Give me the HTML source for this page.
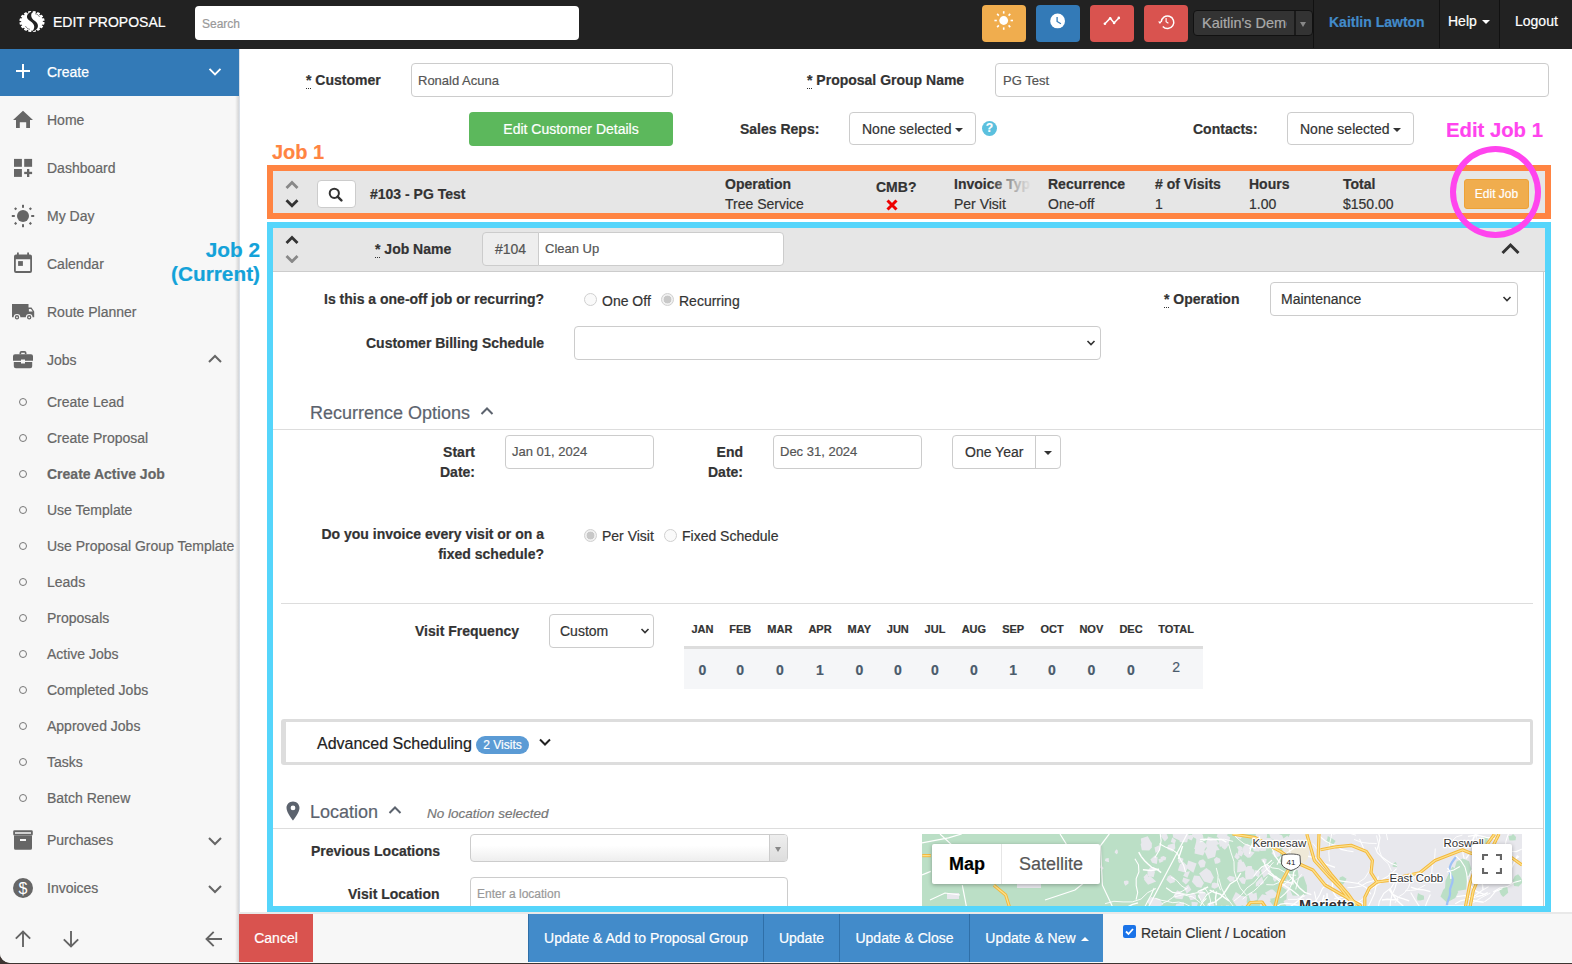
<!DOCTYPE html>
<html><head><meta charset="utf-8">
<style>
*{box-sizing:border-box;margin:0;padding:0}
html,body{width:1572px;height:964px;overflow:hidden;background:#3e3532}
body{font-family:"Liberation Sans",sans-serif;font-size:14px;color:#333;position:relative;-webkit-text-stroke:0.2px currentColor}
.a{position:absolute;white-space:nowrap}
#win{position:absolute;left:0;top:0;width:1572px;height:963px;background:#fff;border-bottom-left-radius:10px;overflow:hidden;border-bottom:1px solid #fafafa}
#hdr{position:absolute;left:0;top:0;width:1572px;height:49px;background:#222;z-index:2}
#side{position:absolute;left:0;top:48px;width:240px;height:915px;background:linear-gradient(to right,#f7f7f7 235px,#e6e6e6 237px,#d8d8d8 238.3px,#d6dce4 239px,#dfe5ec 240px)}
.si{position:absolute;left:47px;color:#666;font-size:14px;line-height:16px}
.sub{position:absolute;left:47px;color:#666;font-size:14px;line-height:16px}
.dot{position:absolute;left:19px;width:8px;height:8px;border:1px solid #777;border-radius:50%}
.hbtn{position:absolute;top:5px;width:44px;height:37px;border-radius:4px}
.lbl{font-weight:bold;color:#333}
.abbr{border-bottom:1px dotted #333}
.caret{position:absolute;width:0;height:0;border-left:4px solid transparent;border-right:4px solid transparent;border-top:4px solid #333}
.radio{position:absolute;width:13px;height:13px;border:1px solid #d0d0d0;border-radius:50%;background:#fafafa}
.radio.on{background:radial-gradient(circle,#c8c8c8 0 3.6px,#f0f0f0 4.2px)}
.mh{width:60px;text-align:center;font-size:11px;font-weight:bold;line-height:13px;color:#333;margin-top:1px}
.mv{width:60px;text-align:center;font-size:14px;font-weight:bold;line-height:16px;color:#4a5b6c}
.fb{top:914px;height:48px;background:#428bca;color:#fff;font-size:14px;line-height:48px;text-align:center;border-left:1px solid #2f6fa8;z-index:4}
.inp{position:absolute;border:1px solid #ccc;border-radius:4px;background:#fff}
</style></head><body>
<div id="win">
<div id="hdr">
  <svg class="a" style="left:17px;top:9px" width="30" height="25" viewBox="-15 -12.5 30 25">
    <g transform="scale(1.06,0.89)" fill="#fff"><circle r="10.2"/><rect x="-1.5" y="-11.9" width="3" height="3" rx="0.6" transform="rotate(11.0)"/><rect x="-1.5" y="-11.9" width="3" height="3" rx="0.6" transform="rotate(33.5)"/><rect x="-1.5" y="-11.9" width="3" height="3" rx="0.6" transform="rotate(56.0)"/><rect x="-1.5" y="-11.9" width="3" height="3" rx="0.6" transform="rotate(78.5)"/><rect x="-1.5" y="-11.9" width="3" height="3" rx="0.6" transform="rotate(101.0)"/><rect x="-1.5" y="-11.9" width="3" height="3" rx="0.6" transform="rotate(123.5)"/><rect x="-1.5" y="-11.9" width="3" height="3" rx="0.6" transform="rotate(146.0)"/><rect x="-1.5" y="-11.9" width="3" height="3" rx="0.6" transform="rotate(168.5)"/><rect x="-1.5" y="-11.9" width="3" height="3" rx="0.6" transform="rotate(191.0)"/><rect x="-1.5" y="-11.9" width="3" height="3" rx="0.6" transform="rotate(213.5)"/><rect x="-1.5" y="-11.9" width="3" height="3" rx="0.6" transform="rotate(236.0)"/><rect x="-1.5" y="-11.9" width="3" height="3" rx="0.6" transform="rotate(258.5)"/><rect x="-1.5" y="-11.9" width="3" height="3" rx="0.6" transform="rotate(281.0)"/><rect x="-1.5" y="-11.9" width="3" height="3" rx="0.6" transform="rotate(303.5)"/><rect x="-1.5" y="-11.9" width="3" height="3" rx="0.6" transform="rotate(326.0)"/><rect x="-1.5" y="-11.9" width="3" height="3" rx="0.6" transform="rotate(348.5)"/></g>
    <path d="M1.8 -10.2 C-5 -9.5 -7.2 -3.8 -2.6 -0.9 C1.2 1.5 4.6 5 0.2 10.2 C7.2 8.2 7.6 2.2 2.6 -0.8 C-1.3 -3.2 -2.2 -8 1.8 -10.2Z" fill="#222"/>
    <path d="M3 -7.8 C5.5 -7.5 7 -6 7.5 -4.5" fill="none" stroke="#777" stroke-width="0.9"/>
    <path d="M-2 7.8 C-4.5 7.5 -6 6 -6.5 4.5" fill="none" stroke="#777" stroke-width="0.9"/>
  </svg>
  <div class="a" style="left:53px;top:14px;color:#fff;font-size:14px;line-height:16px">EDIT PROPOSAL</div>
  <div class="a" style="left:195px;top:6px;width:384px;height:34px;background:#fff;border-radius:4px"></div>
  <div class="a" style="left:202px;top:17px;color:#999;font-size:12px;line-height:14px">Search</div>
  <div class="hbtn" style="left:982px;background:#f0ad4e"></div>
  <svg class="a" style="left:992px;top:9px" width="24" height="24" viewBox="-12 -12 24 24"><g fill="#fff" transform="translate(-0.3,-0.5)"><circle r="4.4"/><rect x="-0.8" y="-9.3" width="1.6" height="2.4" transform="rotate(0)"/><rect x="-0.8" y="-9.3" width="1.6" height="2.4" transform="rotate(45)"/><rect x="-0.8" y="-9.3" width="1.6" height="2.4" transform="rotate(90)"/><rect x="-0.8" y="-9.3" width="1.6" height="2.4" transform="rotate(135)"/><rect x="-0.8" y="-9.3" width="1.6" height="2.4" transform="rotate(180)"/><rect x="-0.8" y="-9.3" width="1.6" height="2.4" transform="rotate(225)"/><rect x="-0.8" y="-9.3" width="1.6" height="2.4" transform="rotate(270)"/><rect x="-0.8" y="-9.3" width="1.6" height="2.4" transform="rotate(315)"/></g></svg>
  <div class="hbtn" style="left:1036px;background:#337ab7"></div>
  <svg class="a" style="left:1046px;top:9px" width="24" height="24" viewBox="-12 -12 24 24"><g transform="translate(-0.4,-0.1)"><circle r="7.4" fill="#fff"/><path d="M-0.5 -3.8 V0.6 L3.3 2.9" fill="none" stroke="#337ab7" stroke-width="1.3"/></g></svg>
  <div class="hbtn" style="left:1090px;background:#d9534f"></div>
  <svg class="a" style="left:1100px;top:9px" width="24" height="24" viewBox="0 0 24 24"><g transform="translate(-1100,-9)"><path d="M1104.9 23.8 L1110.2 18.2 L1114.1 22.9 L1118.8 17.9" fill="none" stroke="#fff" stroke-width="1.5"/><circle cx="1104.9" cy="23.8" r="1.3" fill="#fff"/><circle cx="1110.2" cy="18.2" r="1.3" fill="#fff"/><circle cx="1114.1" cy="22.9" r="1.3" fill="#fff"/><circle cx="1118.8" cy="17.9" r="1.3" fill="#fff"/></g></svg>
  <div class="hbtn" style="left:1144px;background:#d9534f"></div>
  <svg class="a" style="left:1154px;top:9px" width="24" height="24" viewBox="-12 -12 24 24"><g transform="translate(0.4,-0.1)" fill="none" stroke="#fff" stroke-width="1.5"><path d="M-5.2 1.2 A6.3 6.3 0 1 1 -3.6 5.6"/><path d="M-0.3 -2.8 V0.8 L2 2.4" stroke-width="1.1"/></g><path d="M-8.3 0.6 L-4.6 0.6 L-6.45 3.2 Z" fill="#fff" transform="translate(0.4,-0.1)"/></svg>
  <div class="a" style="left:1193px;top:10px;width:120px;height:26px;border:1px solid #111;border-radius:4px;background:#333"></div>
  <div class="a" style="left:1294px;top:11px;width:1.5px;height:24px;background:#1a1a1a"></div>
  <div class="a" style="left:1202px;top:15px;color:#aaa;font-size:14.5px;line-height:17px;width:85px;overflow:hidden">Kaitlin's Demo</div>
  <div class="a" style="left:1300px;top:22px;width:0;height:0;border-left:3px solid transparent;border-right:3px solid transparent;border-top:5px solid #888"></div>
  <div class="a" style="left:1313px;top:0;width:1px;height:48px;background:#111"></div>
  <div class="a" style="left:1329px;top:14px;color:#428bca;font-size:14px;font-weight:bold;line-height:16px">Kaitlin Lawton</div>
  <div class="a" style="left:1439px;top:0;width:1px;height:48px;background:#111"></div>
  <div class="a" style="left:1448px;top:13px;color:#fff;font-size:14px;line-height:16px">Help</div>
  <div class="a" style="left:1482px;top:20px;width:0;height:0;border-left:4px solid transparent;border-right:4px solid transparent;border-top:4px solid #fff"></div>
  <div class="a" style="left:1499px;top:0;width:1px;height:48px;background:#111"></div>
  <div class="a" style="left:1515px;top:13px;color:#fff;font-size:14px;line-height:16px">Logout</div>
</div>

<div id="side">
  <div class="a" style="left:0;top:0;width:239px;height:48px;background:#337ab7"></div>
  <div class="a" style="left:47px;top:16px;color:#fff;font-size:14px;line-height:16px;-webkit-text-stroke:0.25px #fff">Create</div>
  <div class="si" style="top:64px">Home</div>
  <div class="si" style="top:112px">Dashboard</div>
  <div class="si" style="top:160px">My Day</div>
  <div class="si" style="top:208px">Calendar</div>
  <div class="si" style="top:256px">Route Planner</div>
  <div class="si" style="top:304px">Jobs</div>
  <div class="sub" style="top:346px">Create Lead</div>
  <div class="sub" style="top:382px">Create Proposal</div>
  <div class="sub" style="top:418px;font-weight:bold">Create Active Job</div>
  <div class="sub" style="top:454px">Use Template</div>
  <div class="sub" style="top:490px">Use Proposal Group Template</div>
  <div class="sub" style="top:526px">Leads</div>
  <div class="sub" style="top:562px">Proposals</div>
  <div class="sub" style="top:598px">Active Jobs</div>
  <div class="sub" style="top:634px">Completed Jobs</div>
  <div class="sub" style="top:670px">Approved Jobs</div>
  <div class="sub" style="top:706px">Tasks</div>
  <div class="sub" style="top:742px">Batch Renew</div>

  <!-- sidebar icons (coords relative to #side top=48) -->
  <svg class="a" style="left:13px;top:13px" width="20" height="20" viewBox="0 0 20 20"><path d="M10 3 V17 M3 10 H17" fill="none" stroke="#fff" stroke-width="2"/></svg>
  <svg class="a" style="left:207px;top:19px" width="16" height="10" viewBox="0 0 16 10"><path d="M2.5 1.8 L8 7.3 L13.5 1.8" fill="none" stroke="#fff" stroke-width="1.9"/></svg>
  <svg class="a" style="left:13px;top:62px" width="20" height="19" viewBox="0 0 20 19"><path d="M0 10 L10 0.8 L20 10 L17 10 L17 18 L13.2 18 L13.2 12.3 L6.8 12.3 L6.8 18 L3 18 L3 10 Z" fill="#666"/></svg>
  <svg class="a" style="left:13px;top:110px" width="20" height="20" viewBox="0 0 20 20"><g fill="#666"><rect x="1" y="0.9" width="7.9" height="7.9"/><rect x="11.2" y="0.9" width="7.9" height="7.9"/><rect x="1" y="11" width="7.9" height="7.9"/><rect x="14" y="11" width="2.3" height="8"/><rect x="11.2" y="13.8" width="7.9" height="2.3"/></g></svg>
  <svg class="a" style="left:11px;top:156px" width="24" height="24" viewBox="0 0 24 24"><g fill="#666"><circle cx="12" cy="12" r="6"/><rect x="11" y="0.8" width="2" height="3"/><rect x="11" y="20.2" width="2" height="3"/><rect x="0.8" y="11" width="3" height="2"/><rect x="20.2" y="11" width="3" height="2"/><rect x="3.5" y="3.6" width="2.2" height="2.2" transform="rotate(45 4.6 4.7)"/><rect x="18.3" y="3.6" width="2.2" height="2.2" transform="rotate(45 19.4 4.7)"/><rect x="3.5" y="18.3" width="2.2" height="2.2" transform="rotate(45 4.6 19.4)"/><rect x="18.3" y="18.3" width="2.2" height="2.2" transform="rotate(45 19.4 19.4)"/></g></svg>
  <svg class="a" style="left:13px;top:204px" width="20" height="22" viewBox="0 0 20 22"><g fill="#666"><rect x="4" y="0.5" width="1.8" height="3"/><rect x="14.2" y="0.5" width="1.8" height="3"/><path d="M3 2.5 H17 A2 2 0 0 1 19 4.5 V19 A2 2 0 0 1 17 21 H3 A2 2 0 0 1 1 19 V4.5 A2 2 0 0 1 3 2.5 Z M2.8 7.2 V19.1 H17.2 V7.2 Z" fill-rule="evenodd"/><rect x="5.1" y="9.1" width="4.8" height="4.8"/></g></svg>
  <svg class="a" style="left:12px;top:256px" width="23" height="17" viewBox="0 0 23 17"><g fill="#666"><path d="M0 0 H16.5 V3.6 H19.5 L22.2 7.6 V13.2 H0 Z"/></g><path d="M16.9 5 H19 L20.7 7.6 H16.9 Z" fill="#f7f7f7"/><g fill="#666" stroke="#f7f7f7" stroke-width="1.2"><circle cx="5" cy="13.3" r="2.8"/><circle cx="17.2" cy="13.3" r="2.8"/></g><g fill="#f7f7f7"><circle cx="5" cy="13.3" r="0.9"/><circle cx="17.2" cy="13.3" r="0.9"/></g></svg>
  <svg class="a" style="left:13px;top:302px" width="20" height="20" viewBox="0 0 20 20"><g fill="#666"><path d="M6.5 4.3 V3 A2 2 0 0 1 8.5 1 H11.5 A2 2 0 0 1 13.5 3 V4.3 H11.8 V2.8 H8.2 V4.3 Z"/><path d="M2 4.3 H18 A2 2 0 0 1 20 6.3 V10.8 H12 V9.5 H8 V10.8 H0 V6.3 A2 2 0 0 1 2 4.3 Z"/><path d="M0.8 12 H8 V13.5 H12 V12 H19.2 V16.3 A2 2 0 0 1 17.2 18.3 H2.8 A2 2 0 0 1 0.8 16.3 Z"/></g></svg>
  <svg class="a" style="left:207px;top:306px" width="16" height="10" viewBox="0 0 16 10"><path d="M2 8 L8 2 L14 8" fill="none" stroke="#666" stroke-width="2"/></svg>
  <div class="dot" style="top:350px"></div>
<div class="dot" style="top:386px"></div>
<div class="dot" style="top:422px"></div>
<div class="dot" style="top:458px"></div>
<div class="dot" style="top:494px"></div>
<div class="dot" style="top:530px"></div>
<div class="dot" style="top:566px"></div>
<div class="dot" style="top:602px"></div>
<div class="dot" style="top:638px"></div>
<div class="dot" style="top:674px"></div>
<div class="dot" style="top:710px"></div>
<div class="dot" style="top:746px"></div>

  <svg class="a" style="left:13px;top:782px" width="20" height="20" viewBox="0 0 20 20"><g fill="#666"><path d="M1.5 0.2 H18.5 A1.3 1.3 0 0 1 19.8 1.5 V4.2 A1.3 1.3 0 0 1 18.5 5.5 H1.5 A1.3 1.3 0 0 1 0.2 4.2 V1.5 A1.3 1.3 0 0 1 1.5 0.2 Z M2 2.2 V3.8 H18 V2.2 Z" fill-rule="evenodd"/><path d="M1 5.5 H19 V18.2 A1.5 1.5 0 0 1 17.5 19.7 H2.5 A1.5 1.5 0 0 1 1 18.2 Z M7 9 V11 H13 V9 Z" fill-rule="evenodd"/></g></svg>
  <svg class="a" style="left:207px;top:788px" width="16" height="10" viewBox="0 0 16 10"><path d="M2 2 L8 8 L14 2" fill="none" stroke="#666" stroke-width="2"/></svg>
  <svg class="a" style="left:13px;top:830px" width="20" height="20" viewBox="0 0 20 20"><circle cx="10" cy="10" r="10" fill="#666"/><text x="10" y="15.6" text-anchor="middle" font-family="Liberation Sans" font-size="16" fill="#fff">$</text></svg>
  <svg class="a" style="left:207px;top:836px" width="16" height="10" viewBox="0 0 16 10"><path d="M2 2 L8 8 L14 2" fill="none" stroke="#666" stroke-width="2"/></svg>
  <svg class="a" style="left:14px;top:882px" width="18" height="18" viewBox="0 0 18 18"><path d="M9 1.5 V17 M1.8 8.7 L9 1.5 L16.2 8.7" fill="none" stroke="#666" stroke-width="1.9"/></svg>
  <svg class="a" style="left:62px;top:882px" width="18" height="18" viewBox="0 0 18 18"><path d="M9 1 V16.5 M1.8 9.3 L9 16.5 L16.2 9.3" fill="none" stroke="#666" stroke-width="1.9"/></svg>
  <svg class="a" style="left:205px;top:882px" width="18" height="18" viewBox="0 0 18 18"><path d="M1.5 9 H17 M8.7 1.8 L1.5 9 L8.7 16.2" fill="none" stroke="#666" stroke-width="1.9"/></svg>
  <div class="si" style="top:784px">Purchases</div>
  <div class="si" style="top:832px">Invoices</div>
</div>

<div id="main">
  <!-- row 1 -->
  <div class="a lbl" style="left:306px;top:72px;line-height:16px"><span class="abbr">*</span> Customer</div>
  <div class="inp" style="left:411px;top:63px;width:262px;height:34px"></div>
  <div class="a" style="left:418px;top:73px;font-size:13px;line-height:15px;color:#555">Ronald Acuna</div>
  <div class="a lbl" style="left:807px;top:72px;line-height:16px"><span class="abbr">*</span> Proposal Group Name</div>
  <div class="inp" style="left:995px;top:63px;width:554px;height:34px"></div>
  <div class="a" style="left:1003px;top:73px;font-size:13px;line-height:15px;color:#555">PG Test</div>
  <!-- row 2 -->
  <div class="a" style="left:469px;top:112px;width:204px;height:34px;background:#5cb85c;border-radius:4px;color:#fff;text-align:center;line-height:34px">Edit Customer Details</div>
  <div class="a lbl" style="left:740px;top:121px;line-height:16px">Sales Reps:</div>
  <div class="inp" style="left:849px;top:112px;width:127px;height:33px"></div>
  <div class="a" style="left:862px;top:121px;line-height:16px;color:#333">None selected</div>
  <div class="caret" style="left:955px;top:128px"></div>
  <div class="a" style="left:982px;top:121px;width:15px;height:15px;border-radius:50%;background:#5bc0de;color:#fff;font-weight:bold;font-size:12px;line-height:15px;text-align:center">?</div>
  <div class="a lbl" style="left:1193px;top:121px;line-height:16px">Contacts:</div>
  <div class="inp" style="left:1287px;top:112px;width:127px;height:33px"></div>
  <div class="a" style="left:1300px;top:121px;line-height:16px;color:#333">None selected</div>
  <div class="caret" style="left:1393px;top:128px"></div>

  <!-- annotations -->
  <div class="a" style="left:272px;top:140px;color:#ff8442;font-weight:bold;font-size:20px;line-height:24px">Job 1</div>
  <div class="a" style="left:1446px;top:118px;color:#ff44ee;font-weight:bold;font-size:20.3px;line-height:24px">Edit Job 1</div>

  <!-- job 1 -->
  <div class="a" style="left:267px;top:165px;width:1284px;height:54px;border:6px solid #ff8442;background:#e6e6e6"></div>
  <svg class="a" style="left:284px;top:179px" width="16" height="30" viewBox="0 0 16 30">
    <path d="M2.5 9 L8 3.5 L13.5 9" fill="none" stroke="#888" stroke-width="2.8"/>
    <path d="M2.5 21.3 L8 26.8 L13.5 21.3" fill="none" stroke="#333" stroke-width="2.8"/>
  </svg>
  <div class="a" style="left:317px;top:180px;width:39px;height:28px;background:#fff;border:1px solid #ccc;border-radius:4px"></div>
  <svg class="a" style="left:328px;top:187px" width="15" height="15" viewBox="0 0 15 15">
    <circle cx="6.3" cy="6.3" r="4.6" fill="none" stroke="#333" stroke-width="2"/>
    <path d="M9.6 9.6 L13.4 13.4" stroke="#333" stroke-width="2.4" stroke-linecap="round"/>
  </svg>
  <div class="a lbl" style="left:370px;top:186px;line-height:16px">#103 - PG Test</div>
  <div class="a lbl" style="left:725px;top:176px;line-height:16px">Operation</div>
  <div class="a" style="left:725px;top:196px;line-height:16px;color:#333">Tree Service</div>
  <div class="a lbl" style="left:876px;top:179px;line-height:16px">CMB?</div>
  <svg class="a" style="left:886px;top:199px" width="12" height="12" viewBox="0 0 12 12"><path d="M1.5 1.5 L10.5 10.5 M10.5 1.5 L1.5 10.5" stroke="#e00" stroke-width="3"/></svg>
  <div class="a lbl" style="left:954px;top:176px;line-height:16px;width:76px;overflow:hidden">Invoice Type</div>
  <div class="a" style="left:990px;top:174px;width:42px;height:20px;background:linear-gradient(to right,rgba(230,230,230,0),rgba(230,230,230,.6) 50%,#e6e6e6)"></div>
  <div class="a" style="left:954px;top:196px;line-height:16px;color:#333">Per Visit</div>
  <div class="a lbl" style="left:1048px;top:176px;line-height:16px">Recurrence</div>
  <div class="a" style="left:1048px;top:196px;line-height:16px;color:#333">One-off</div>
  <div class="a lbl" style="left:1155px;top:176px;line-height:16px"># of Visits</div>
  <div class="a" style="left:1155px;top:196px;line-height:16px;color:#333">1</div>
  <div class="a lbl" style="left:1249px;top:176px;line-height:16px">Hours</div>
  <div class="a" style="left:1249px;top:196px;line-height:16px;color:#333">1.00</div>
  <div class="a lbl" style="left:1343px;top:176px;line-height:16px">Total</div>
  <div class="a" style="left:1343px;top:196px;line-height:16px;color:#333">$150.00</div>
  <div class="a" style="left:1464px;top:179px;width:65px;height:30px;background:#f0ad4e;border:1px solid #eea236;border-radius:3px;color:#fff;font-size:12px;line-height:28px;text-align:center">Edit Job</div>

  <!-- job 2 box -->
  <div class="a" style="left:267px;top:222px;width:1284px;height:690px;border:6px solid #55d5fb;z-index:3"></div>
  <div class="a" style="left:273px;top:228px;width:1272px;height:44px;background:#e6e6e6;border-bottom:1px solid #ccc"></div>

  <!-- job 2 header -->
  <svg class="a" style="left:284px;top:233px" width="16" height="30" viewBox="0 0 16 30">
    <path d="M2.5 10 L8 4.5 L13.5 10" fill="none" stroke="#333" stroke-width="2.8"/>
    <path d="M2.5 23 L8 28.5 L13.5 23" fill="none" stroke="#888" stroke-width="2.8"/>
  </svg>
  <div class="a lbl" style="left:375px;top:241px;line-height:16px"><span class="abbr">*</span> Job Name</div>
  <div class="a" style="left:482px;top:232px;width:57px;height:34px;background:#eee;border:1px solid #ccc;border-radius:4px 0 0 4px;color:#555;line-height:32px;text-align:center">#104</div>
  <div class="inp" style="left:538px;top:232px;width:246px;height:34px;border-radius:0 4px 4px 0"></div>
  <div class="a" style="left:545px;top:241px;font-size:13px;line-height:15px;color:#555">Clean Up</div>
  <svg class="a" style="left:1500px;top:242px" width="21" height="14" viewBox="0 0 21 14">
    <path d="M2.5 11 L10.5 3 L18.5 11" fill="none" stroke="#333" stroke-width="3"/>
  </svg>
  <!-- inner panel border -->
  <div class="a" style="left:1543px;top:272px;width:1px;height:640px;background:#ccc"></div>

  <div class="a lbl" style="left:324px;top:291px;line-height:16px">Is this a one-off job or recurring?</div>
  <div class="radio" style="left:584px;top:293px"></div>
  <div class="a" style="left:602px;top:293px;line-height:16px;color:#333">One Off</div>
  <div class="radio on" style="left:661px;top:293px"></div>
  <div class="a" style="left:679px;top:293px;line-height:16px;color:#333">Recurring</div>

  <div class="a lbl" style="left:1164px;top:291px;line-height:16px"><span class="abbr">*</span> Operation</div>
  <div class="inp" style="left:1270px;top:282px;width:248px;height:34px"></div>
  <div class="a" style="left:1281px;top:291px;line-height:16px;color:#333">Maintenance</div>
  <svg class="a" style="left:1502px;top:295px" width="10" height="8" viewBox="0 0 10 8"><path d="M1.5 2 L5 5.5 L8.5 2" fill="none" stroke="#333" stroke-width="1.6"/></svg>

  <div class="a lbl" style="left:366px;top:335px;line-height:16px">Customer Billing Schedule</div>
  <div class="inp" style="left:574px;top:326px;width:527px;height:34px"></div>
  <svg class="a" style="left:1086px;top:339px" width="10" height="8" viewBox="0 0 10 8"><path d="M1.5 2 L5 5.5 L8.5 2" fill="none" stroke="#333" stroke-width="1.6"/></svg>

  <div class="a" style="left:310px;top:403px;font-size:18px;line-height:21px;color:#5c636e">Recurrence Options</div>
  <svg class="a" style="left:479px;top:405px" width="16" height="12" viewBox="0 0 16 12"><path d="M2.5 9 L8 3.5 L13.5 9" fill="none" stroke="#5c636e" stroke-width="2"/></svg>
  <div class="a" style="left:273px;top:429px;width:1270px;height:1px;background:#ddd"></div>

  <div class="a lbl" style="left:430px;top:442px;line-height:20px;text-align:right;width:45px;white-space:normal">Start Date:</div>
  <div class="inp" style="left:505px;top:435px;width:149px;height:34px"></div>
  <div class="a" style="left:512px;top:444px;font-size:13px;line-height:15px;color:#555">Jan 01, 2024</div>
  <div class="a lbl" style="left:697px;top:442px;line-height:20px;text-align:right;width:46px;white-space:normal">End Date:</div>
  <div class="inp" style="left:773px;top:435px;width:149px;height:34px"></div>
  <div class="a" style="left:780px;top:444px;font-size:13px;line-height:15px;color:#555">Dec 31, 2024</div>
  <div class="inp" style="left:952px;top:435px;width:109px;height:34px"></div>
  <div class="a" style="left:1035px;top:436px;width:1px;height:32px;background:#ccc"></div>
  <div class="a" style="left:965px;top:444px;line-height:16px;color:#333">One Year</div>
  <div class="caret" style="left:1044px;top:451px"></div>

  <div class="a lbl" style="left:300px;top:524px;line-height:20px;text-align:right;width:244px;white-space:normal">Do you invoice every visit or on a fixed schedule?</div>
  <div class="radio on" style="left:584px;top:529px"></div>
  <div class="a" style="left:602px;top:528px;line-height:16px;color:#333">Per Visit</div>
  <div class="radio" style="left:664px;top:529px"></div>
  <div class="a" style="left:682px;top:528px;line-height:16px;color:#333">Fixed Schedule</div>

  <div class="a" style="left:281px;top:603px;width:1252px;height:1px;background:#ddd"></div>

  <div class="a lbl" style="left:415px;top:623px;line-height:16px">Visit Frequency</div>
  <div class="inp" style="left:549px;top:614px;width:105px;height:34px"></div>
  <div class="a" style="left:560px;top:623px;line-height:16px;color:#333">Custom</div>
  <svg class="a" style="left:640px;top:627px" width="10" height="8" viewBox="0 0 10 8"><path d="M1.5 2 L5 5.5 L8.5 2" fill="none" stroke="#333" stroke-width="1.6"/></svg>

  <div class="a" style="left:684px;top:646px;width:519px;height:3px;background:#ddd"></div>
  <div class="a" style="left:684px;top:649px;width:519px;height:40px;background:#f5f6f8"></div>
  <div class="a mh" style="left:672.4px;top:622px">JAN</div>
<div class="a mv" style="left:672.4px;top:662px">0</div>
<div class="a mh" style="left:710.2px;top:622px">FEB</div>
<div class="a mv" style="left:710.2px;top:662px">0</div>
<div class="a mh" style="left:749.9px;top:622px">MAR</div>
<div class="a mv" style="left:749.9px;top:662px">0</div>
<div class="a mh" style="left:790.0px;top:622px">APR</div>
<div class="a mv" style="left:790.0px;top:662px">1</div>
<div class="a mh" style="left:829.3px;top:622px">MAY</div>
<div class="a mv" style="left:829.3px;top:662px">0</div>
<div class="a mh" style="left:867.8px;top:622px">JUN</div>
<div class="a mv" style="left:867.8px;top:662px">0</div>
<div class="a mh" style="left:905.0px;top:622px">JUL</div>
<div class="a mv" style="left:905.0px;top:662px">0</div>
<div class="a mh" style="left:943.9px;top:622px">AUG</div>
<div class="a mv" style="left:943.9px;top:662px">0</div>
<div class="a mh" style="left:983.2px;top:622px">SEP</div>
<div class="a mv" style="left:983.2px;top:662px">1</div>
<div class="a mh" style="left:1022.0px;top:622px">OCT</div>
<div class="a mv" style="left:1022.0px;top:662px">0</div>
<div class="a mh" style="left:1061.3px;top:622px">NOV</div>
<div class="a mv" style="left:1061.3px;top:662px">0</div>
<div class="a mh" style="left:1101.0px;top:622px">DEC</div>
<div class="a mv" style="left:1101.0px;top:662px">0</div>
<div class="a mh" style="left:1146.1px;top:622px">TOTAL</div>
<div class="a mv" style="left:1146.1px;top:659px;font-weight:normal">2</div>


  <!-- advanced scheduling -->
  <div class="a" style="left:281px;top:719px;width:1252px;height:46px;border:3px solid #ddd;border-left-width:5px;border-radius:3px;background:#fff"></div>
  <div class="a" style="left:317px;top:735px;font-size:16px;line-height:18px;color:#222">Advanced Scheduling</div>
  <div class="a" style="left:476px;top:736px;width:53px;height:18px;border-radius:9px;background:#5b9bd5;color:#fff;font-size:12px;line-height:18px;text-align:center">2 Visits</div>
  <svg class="a" style="left:538px;top:737px" width="14" height="11" viewBox="0 0 14 11"><path d="M2 2.5 L7 7.5 L12 2.5" fill="none" stroke="#222" stroke-width="2"/></svg>

  <!-- location -->
  <svg class="a" style="left:286px;top:801px" width="14" height="20" viewBox="0 0 14 20"><path d="M7 0.5 C3.4 0.5 0.5 3.3 0.5 6.9 C0.5 11.5 7 19.5 7 19.5 C7 19.5 13.5 11.5 13.5 6.9 C13.5 3.3 10.6 0.5 7 0.5Z M7 4.5 A2.4 2.4 0 1 1 7 9.3 A2.4 2.4 0 1 1 7 4.5Z" fill="#5c636e" fill-rule="evenodd"/></svg>
  <div class="a" style="left:310px;top:802px;font-size:18px;line-height:21px;color:#5c636e">Location</div>
  <svg class="a" style="left:387px;top:804px" width="16" height="12" viewBox="0 0 16 12"><path d="M2.5 9 L8 3.5 L13.5 9" fill="none" stroke="#5c636e" stroke-width="2"/></svg>
  <div class="a" style="left:427px;top:806px;font-style:italic;font-size:13.5px;line-height:16px;color:#777">No location selected</div>
  <div class="a" style="left:273px;top:828px;width:1270px;height:1px;background:#ddd"></div>

  <div class="a lbl" style="left:311px;top:843px;line-height:16px">Previous Locations</div>
  <div class="a" style="left:470px;top:834px;width:318px;height:28px;border:1px solid #ccc;border-radius:4px;background:linear-gradient(#fff 40%,#eee)"></div>
  <div class="a" style="left:769px;top:835px;width:18px;height:26px;border-left:1px solid #ccc;background:linear-gradient(#eee,#ddd);border-radius:0 3px 3px 0"></div>
  <div class="a" style="left:775px;top:847px;width:0;height:0;border-left:3px solid transparent;border-right:3px solid transparent;border-top:5px solid #888"></div>
  <div class="a lbl" style="left:348px;top:886px;line-height:16px">Visit Location</div>
  <div class="inp" style="left:470px;top:877px;width:318px;height:34px"></div>
  <div class="a" style="left:477px;top:887px;font-size:12px;line-height:14px;color:#999">Enter a location</div>


  <!-- Job 2 annotation -->
  <div class="a" style="left:140px;top:238px;width:120px;text-align:right;color:#14a2d9;font-weight:bold;font-size:20.8px;line-height:23.5px;z-index:5">Job 2<br>(Current)</div>
  <!-- magenta circle -->
  <div class="a" style="left:1450px;top:146px;width:91px;height:92px;border:6px solid #ff44ee;border-radius:50%;z-index:6"></div>

  <!-- footer -->
  <div class="a" style="left:239px;top:912px;width:1333px;height:50px;background:#f7f7f7;border-top:2px solid #e9e9e9;z-index:4"></div>
  <div class="a" style="left:239px;top:914px;width:74px;height:48px;background:#d9534f;color:#fff;font-size:14px;line-height:48px;text-align:center;z-index:4">Cancel</div>
  <div class="a fb" style="left:528px;width:235px">Update &amp; Add to Proposal Group</div>
  <div class="a fb" style="left:763px;width:76px">Update</div>
  <div class="a fb" style="left:839px;width:130px">Update &amp; Close</div>
  <div class="a fb" style="left:969px;width:134px;padding-right:12px">Update &amp; New</div>
  <div class="a" style="left:1081px;top:937px;width:0;height:0;border-left:4px solid transparent;border-right:4px solid transparent;border-bottom:4px solid #fff;z-index:5"></div>
  <div class="a" style="left:1123px;top:925px;width:13px;height:13px;border-radius:2px;background:#1a73e8;z-index:5"></div>
  <svg class="a" style="left:1123px;top:925px;z-index:6" width="13" height="13" viewBox="0 0 13 13"><path d="M3 6.5 L5.5 9 L10 4" fill="none" stroke="#fff" stroke-width="1.8"/></svg>
  <div class="a" style="left:1141px;top:925px;line-height:16px;color:#333;z-index:5">Retain Client / Location</div>
  <!-- map -->
  <div class="a" id="map" style="left:922px;top:834px;width:600px;height:80px;overflow:hidden">
  <svg width="600" height="80" viewBox="922 834 600 80"><rect x="922" y="834" width="600" height="80" fill="#bbdfc6"/><path d="M1290 834 L1522 834 L1522 914 L1285 914 C1290 890 1282 860 1290 834Z" fill="#e8e8ed"/><polygon points="1147.9,879.5 1144.7,879.4 1143.5,876.9 1146.7,873.8 1148.2,875.7 1148.5,877.7" fill="#e8e8ed"/><polygon points="1174.9,882.0 1170.3,883.6 1166.3,879.7 1168.0,876.5 1170.2,875.1 1174.6,877.9" fill="#e8e8ed"/><polygon points="1183.3,877.4 1190.1,879.7 1185.9,884.6 1182.2,881.3" fill="#e8e8ed"/><polygon points="1206.4,893.2 1202.3,901.5 1197.7,897.1 1200.5,889.9" fill="#e8e8ed"/><polygon points="1151.6,842.9 1141.6,845.4 1140.8,838.5 1147.8,836.3" fill="#e8e8ed"/><polygon points="1211.0,847.8 1207.5,847.7 1205.8,845.7 1209.2,842.5 1211.3,845.5" fill="#e8e8ed"/><polygon points="1291.1,845.5 1288.4,847.5 1284.2,844.3 1288.1,841.9" fill="#e8e8ed"/><polygon points="1279.2,908.4 1276.4,915.8 1271.4,916.1 1268.2,911.5 1269.8,907.8" fill="#e8e8ed"/><polygon points="1158.4,859.2 1160.9,858.4 1163.9,861.0 1159.6,863.1" fill="#e8e8ed"/><polygon points="1206.0,843.5 1207.9,836.5 1215.6,838.9 1219.8,843.9 1209.7,847.0" fill="#e8e8ed"/><polygon points="1218.9,828.5 1229.1,830.0 1224.6,842.3 1216.7,836.8" fill="#e8e8ed"/><polygon points="1259.1,900.3 1262.6,897.4 1265.1,896.9 1268.4,900.1 1265.4,903.8 1262.1,902.7" fill="#e8e8ed"/><polygon points="1154.2,866.9 1154.8,872.3 1153.7,877.2 1147.5,875.7 1147.5,871.4 1150.0,867.4" fill="#e8e8ed"/><polygon points="1261.9,910.4 1268.5,911.5 1263.1,917.1 1257.2,913.4" fill="#e8e8ed"/><polygon points="1241.2,859.2 1242.4,862.5 1238.7,863.6 1238.2,860.3" fill="#e8e8ed"/><polygon points="1246.3,904.2 1237.2,907.1 1233.5,901.7 1237.0,897.7 1242.7,896.0 1247.3,897.1" fill="#e8e8ed"/><polygon points="1272.9,836.5 1277.1,834.1 1279.2,837.1 1276.1,840.0" fill="#e8e8ed"/><polygon points="1199.1,873.6 1206.3,868.1 1210.5,870.9 1213.8,877.4 1211.0,883.6 1204.1,881.4" fill="#e8e8ed"/><polygon points="1290.0,884.2 1286.3,889.7 1280.6,885.7 1283.9,882.7" fill="#e8e8ed"/><polygon points="1215.1,863.7 1213.9,859.3 1216.4,857.1 1220.1,858.8 1220.5,862.0 1217.8,863.5" fill="#e8e8ed"/><polygon points="1183.8,902.2 1184.6,909.7 1178.5,914.2 1173.8,910.2 1176.4,903.8" fill="#e8e8ed"/><polygon points="1279.9,856.1 1277.0,857.3 1275.1,855.2 1277.8,852.0 1280.1,852.0" fill="#e8e8ed"/><polygon points="1176.0,840.2 1174.8,843.5 1170.8,842.0 1172.2,837.4" fill="#e8e8ed"/><polygon points="1293.3,870.9 1295.8,875.7 1294.5,879.5 1288.7,878.4 1286.2,874.6 1289.2,871.4" fill="#e8e8ed"/><polygon points="1192.1,835.0 1193.2,837.6 1191.5,840.4 1188.0,838.8 1188.2,836.5 1189.9,834.7" fill="#e8e8ed"/><polygon points="1166.8,847.9 1168.4,845.2 1171.7,845.2 1171.8,848.1 1169.3,849.8" fill="#e8e8ed"/><polygon points="1249.0,850.3 1247.6,852.8 1244.2,853.4 1242.8,850.6 1245.1,847.2" fill="#e8e8ed"/><polygon points="1279.9,844.7 1273.9,840.5 1275.0,832.6 1282.0,835.2 1285.1,841.8" fill="#e8e8ed"/><polygon points="1255.8,886.7 1255.8,882.6 1259.2,881.2 1259.3,885.4" fill="#e8e8ed"/><polygon points="1297.7,878.4 1293.7,881.1 1292.0,879.6 1292.6,876.0 1295.0,876.0" fill="#e8e8ed"/><polygon points="1219.1,917.8 1211.3,914.7 1214.9,909.1 1222.0,905.6 1225.6,909.2 1223.5,915.6" fill="#e8e8ed"/><polygon points="1156.9,863.9 1152.1,862.7 1150.4,859.6 1154.8,855.4 1157.7,857.6" fill="#e8e8ed"/><polygon points="1172.2,831.0 1181.7,831.1 1186.2,838.9 1179.7,840.4 1173.2,837.6" fill="#e8e8ed"/><polygon points="1273.1,879.6 1272.8,876.6 1275.8,875.5 1277.2,876.6 1277.5,879.4 1274.8,881.9" fill="#e8e8ed"/><polygon points="1203.0,855.5 1194.5,853.6 1195.4,846.4 1205.4,850.8" fill="#e8e8ed"/><polygon points="1155.6,853.0 1154.5,847.4 1159.7,845.1 1160.2,850.0" fill="#e8e8ed"/><polygon points="1182.3,899.3 1175.5,898.5 1173.8,895.1 1177.2,890.2 1184.6,893.9" fill="#e8e8ed"/><polygon points="1278.8,833.0 1276.6,841.2 1270.7,838.0 1268.2,831.1 1274.4,829.3" fill="#e8e8ed"/><polygon points="1293.5,843.7 1290.5,847.3 1284.3,843.6 1289.7,834.9 1294.8,837.5" fill="#e8e8ed"/><polygon points="1252.4,846.0 1252.1,837.1 1264.0,834.3 1262.3,847.5" fill="#e8e8ed"/><polygon points="1206.7,848.2 1215.7,845.6 1216.4,849.7 1215.1,856.7 1207.9,859.0 1204.7,851.6" fill="#e8e8ed"/><polygon points="1198.4,838.3 1193.1,833.1 1195.1,825.7 1206.2,829.2" fill="#e8e8ed"/><polygon points="1219.7,850.1 1215.6,850.6 1210.8,850.3 1211.1,846.1 1213.3,842.6 1216.7,845.3" fill="#e8e8ed"/><polygon points="1145.8,840.0 1151.9,842.9 1151.8,847.6 1149.2,850.5 1141.8,850.3 1140.6,843.9" fill="#e8e8ed"/><polygon points="1262.4,867.4 1266.9,863.6 1270.4,867.2 1269.1,872.0 1264.3,872.5" fill="#e8e8ed"/><polygon points="1261.9,840.8 1261.0,836.9 1262.6,834.8 1264.4,835.4 1267.3,837.9 1265.1,840.8" fill="#e8e8ed"/><polygon points="1288.8,908.4 1292.9,911.1 1289.5,916.2 1285.8,914.3 1285.9,909.1" fill="#e8e8ed"/><polygon points="1261.3,885.0 1256.5,882.0 1261.9,876.6 1264.0,883.1" fill="#e8e8ed"/><polygon points="1251.7,866.0 1253.2,872.2 1248.5,873.5 1245.9,872.4 1244.8,868.7 1247.8,866.0" fill="#e8e8ed"/><polygon points="1164.8,841.6 1162.5,838.4 1160.8,835.7 1165.5,832.6 1167.1,834.8 1168.1,838.0" fill="#e8e8ed"/><polygon points="1198.0,902.5 1196.8,907.0 1194.3,907.7 1191.8,906.4 1191.5,901.8 1194.6,902.1" fill="#e8e8ed"/><polygon points="1191.3,889.8 1186.7,893.8 1184.3,888.1 1188.3,884.6" fill="#e8e8ed"/><polygon points="1237.0,872.4 1237.7,861.9 1243.7,861.7 1247.3,869.1 1243.7,871.2" fill="#e8e8ed"/><polygon points="1156.2,881.4 1148.0,884.8 1143.9,879.6 1149.9,875.8" fill="#e8e8ed"/><polygon points="1286.3,855.3 1281.9,849.8 1288.7,839.9 1297.4,844.8 1295.0,853.9" fill="#e8e8ed"/><polygon points="1141.0,916.3 1137.4,912.1 1142.1,907.9 1144.8,911.4" fill="#e8e8ed"/><polygon points="1230.1,881.9 1226.8,878.3 1229.7,875.8 1234.7,877.1 1234.4,880.8" fill="#e8e8ed"/><polygon points="1196.1,837.3 1196.3,832.8 1202.8,834.4 1203.7,839.6 1196.5,841.7" fill="#e8e8ed"/><polygon points="1262.1,827.1 1267.6,833.3 1262.1,838.1 1256.6,840.1 1255.9,836.0 1258.5,830.4" fill="#e8e8ed"/><polygon points="1185.5,832.5 1188.2,833.7 1189.3,836.9 1185.6,839.4 1182.5,835.5" fill="#e8e8ed"/><polygon points="1195.9,894.9 1196.2,899.1 1190.6,900.2 1188.6,896.4 1190.9,894.0 1193.1,892.5" fill="#e8e8ed"/><polygon points="1199.3,860.5 1203.1,859.2 1205.8,861.9 1204.6,867.0 1200.5,867.7 1198.1,863.0" fill="#e8e8ed"/><polygon points="1286.3,854.7 1282.6,855.9 1281.4,854.0 1283.5,849.4 1286.2,849.4 1287.9,852.1" fill="#e8e8ed"/><polygon points="1162.5,835.2 1158.7,833.1 1161.8,829.9 1164.3,831.3" fill="#e8e8ed"/><polygon points="1163.6,856.1 1166.3,857.6 1165.5,860.2 1162.5,860.3 1160.9,859.3 1160.6,856.9" fill="#e8e8ed"/><polygon points="1254.6,852.6 1250.4,857.4 1247.6,857.8 1243.2,854.0 1246.1,852.1 1250.9,851.3" fill="#e8e8ed"/><polygon points="1203.9,883.1 1201.3,887.8 1196.7,886.9 1191.9,881.7 1194.1,875.4 1199.5,876.0" fill="#e8e8ed"/><polygon points="1227.5,845.2 1227.5,847.1 1224.8,849.8 1221.9,847.6 1222.2,845.3 1225.4,842.5" fill="#e8e8ed"/><polygon points="1270.5,903.9 1270.2,908.9 1263.2,914.3 1258.4,909.0 1262.1,902.9 1265.8,902.0" fill="#e8e8ed"/><polygon points="1253.7,851.2 1252.0,845.1 1259.7,845.8 1259.4,851.5" fill="#e8e8ed"/><polygon points="1250.9,902.1 1248.6,895.6 1256.5,892.6 1257.4,899.6" fill="#e8e8ed"/><polygon points="1261.3,850.9 1258.6,850.3 1259.9,845.8 1262.9,844.5 1267.1,846.1 1265.8,850.7" fill="#e8e8ed"/><polygon points="1186.3,868.1 1188.2,860.5 1196.6,863.4 1193.4,872.8" fill="#e8e8ed"/><polygon points="1282.6,838.9 1287.3,835.7 1292.8,842.4 1290.2,846.3 1282.8,847.8 1280.7,844.6" fill="#e8e8ed"/><polygon points="1279.1,848.0 1281.1,853.1 1278.4,855.2 1275.0,857.0 1271.4,853.0 1275.8,849.0" fill="#e8e8ed"/><polygon points="1239.9,845.8 1242.6,847.6 1242.7,850.3 1239.5,851.5 1236.7,847.0" fill="#e8e8ed"/><polygon points="1214.1,882.5 1218.6,883.7 1218.3,886.9 1214.6,888.8 1211.4,887.2 1212.0,883.3" fill="#e8e8ed"/><polygon points="1167.9,844.9 1174.8,843.0 1175.3,848.2 1172.4,851.7 1167.5,848.9" fill="#e8e8ed"/><polygon points="1237.4,915.0 1238.2,906.9 1247.2,904.9 1245.5,915.3" fill="#e8e8ed"/><polygon points="1245.6,879.7 1245.0,873.3 1246.1,867.6 1254.3,869.8 1255.1,875.8 1252.1,878.9" fill="#e8e8ed"/><polygon points="1246.1,879.6 1244.8,884.0 1241.8,883.6 1238.5,878.8 1243.0,876.8" fill="#e8e8ed"/><polygon points="1266.6,865.3 1271.5,871.5 1263.6,877.9 1260.7,869.9" fill="#e8e8ed"/><polygon points="1257.8,900.2 1262.1,894.3 1270.0,895.7 1270.6,900.7 1261.1,905.2" fill="#e8e8ed"/><polygon points="1241.6,856.6 1237.3,854.7 1238.6,849.7 1244.2,851.7" fill="#e8e8ed"/><polygon points="1236.4,852.4 1239.9,856.9 1237.4,859.7 1234.3,857.1" fill="#e8e8ed"/><polygon points="1207.0,841.5 1209.7,838.5 1213.6,842.4 1213.6,846.8 1207.6,849.2 1206.1,846.7" fill="#e8e8ed"/><polygon points="1239.2,827.8 1242.9,834.7 1240.8,838.9 1235.4,836.9 1234.6,830.0" fill="#e8e8ed"/><polygon points="1179.2,863.2 1178.0,860.8 1179.1,857.1 1183.4,858.8 1182.8,861.9" fill="#e8e8ed"/><polygon points="1255.9,833.4 1257.8,827.7 1267.0,830.9 1267.0,836.7 1260.7,841.5 1255.3,840.7" fill="#e8e8ed"/><polygon points="1243.2,905.8 1243.6,904.5 1246.8,902.3 1247.8,905.2 1247.2,908.4 1244.6,907.9" fill="#e8e8ed"/><polygon points="1179.9,864.3 1183.2,861.8 1187.4,865.7 1186.9,869.9 1184.8,872.4 1177.9,870.4" fill="#e8e8ed"/><polygon points="1230.2,837.5 1228.2,846.0 1219.8,846.8 1218.3,839.5 1221.2,833.6 1226.5,835.1" fill="#e8e8ed"/><polygon points="1264.9,892.7 1270.8,889.6 1272.8,889.5 1278.0,894.6 1274.2,897.9 1269.6,898.7" fill="#e8e8ed"/><polygon points="1287.7,899.0 1291.1,901.0 1290.8,904.1 1288.1,906.2 1284.7,904.1 1283.5,901.0" fill="#e8e8ed"/><polygon points="1246.2,899.7 1243.6,903.8 1235.7,904.3 1232.1,899.6 1235.8,892.1 1240.2,895.1" fill="#e8e8ed"/><polygon points="1268.3,913.8 1262.4,913.5 1259.0,907.4 1261.8,901.4 1268.0,899.3 1274.1,906.6" fill="#e8e8ed"/><polygon points="1179.2,835.5 1186.0,831.0 1188.6,836.1 1187.2,842.2 1179.8,842.3" fill="#e8e8ed"/><polygon points="1187.4,877.7 1183.2,875.8 1185.2,872.0 1190.0,871.3" fill="#e8e8ed"/><polygon points="1257.9,843.7 1262.6,841.0 1264.2,844.0 1263.2,848.0 1261.4,849.2 1256.7,846.6" fill="#e8e8ed"/><polygon points="1163.2,904.8 1153.0,909.2 1146.9,901.4 1151.1,896.9 1159.7,899.0" fill="#e8e8ed"/><polygon points="1281.7,854.6 1286.0,849.7 1291.3,850.3 1295.4,855.8 1292.4,857.8 1286.5,860.5" fill="#e8e8ed"/><polygon points="1260.3,871.6 1258.4,877.2 1253.9,874.7 1255.3,869.9" fill="#e8e8ed"/><polygon points="1215.3,843.4 1214.2,847.5 1211.9,848.6 1209.5,847.9 1208.6,844.2 1212.5,841.9" fill="#e8e8ed"/><polygon points="1199.9,826.9 1202.4,833.4 1200.0,841.1 1191.8,836.2 1193.3,828.8" fill="#e8e8ed"/><polygon points="1201.8,840.4 1207.3,845.1 1204.0,850.8 1194.2,849.0 1196.7,839.8" fill="#e8e8ed"/><polygon points="1277.5,844.2 1272.2,847.0 1264.2,844.2 1264.0,838.1 1271.1,837.9" fill="#e8e8ed"/><polygon points="1263.9,862.5 1262.0,861.4 1261.3,858.9 1264.7,858.5 1266.7,859.3 1266.1,863.4" fill="#e8e8ed"/><polygon points="1251.7,892.5 1253.3,894.0 1254.8,897.1 1252.3,898.3 1249.5,897.6 1248.2,894.1" fill="#e8e8ed"/><polygon points="1214.7,906.5 1210.8,908.4 1206.7,905.9 1208.6,903.4 1212.9,901.3" fill="#e8e8ed"/><polygon points="1224.0,907.5 1226.1,905.6 1229.0,905.6 1229.5,906.9 1229.7,910.4 1226.7,909.7" fill="#e8e8ed"/><polygon points="1242.0,850.3 1243.9,845.8 1247.3,843.8 1252.4,847.0 1249.1,851.7 1246.4,855.2" fill="#e8e8ed"/><polygon points="1115.0,850.9 1116.6,849.2 1117.7,850.6 1117.9,853.0 1116.6,854.3 1114.6,852.5" fill="#e8e8ed"/><polygon points="1108.7,857.9 1108.8,860.2 1109.1,862.3 1106.2,861.6 1104.9,860.7 1105.6,858.6" fill="#e8e8ed"/><polygon points="1102.5,869.8 1099.9,867.5 1100.8,865.1 1103.6,868.0" fill="#e8e8ed"/><polygon points="1125.4,885.8 1123.9,883.1 1124.0,880.9 1126.9,880.4 1128.5,881.1 1128.5,883.6" fill="#e8e8ed"/><rect x="1017" y="883" width="24" height="5" fill="#e8e8ed"/><rect x="947" y="893" width="12" height="6" fill="#e8e8ed"/><polygon points="1306.8,885.6 1307.1,894.2 1300.1,895.8 1292.6,895.6 1288.8,887.0 1293.2,881.8 1303.4,875.9" fill="#bbdfc6"/><polygon points="1286.1,869.7 1290.7,866.9 1297.8,870.3 1298.7,877.1 1295.1,880.1 1289.9,881.9 1284.7,877.1" fill="#bbdfc6"/><polygon points="1335.6,840.9 1333.2,844.4 1328.9,844.7 1326.1,841.3 1327.3,838.8 1327.8,835.9 1332.1,838.6" fill="#bbdfc6"/><polygon points="1445.0,889.1 1445.5,880.4 1452.2,866.7 1457.2,869.8 1467.3,875.6 1466.0,889.4 1453.1,891.7" fill="#bbdfc6"/><polygon points="1462.7,858.5 1469.0,861.3 1471.9,870.8 1468.9,875.4 1461.3,877.5 1454.2,870.0 1456.6,861.5" fill="#bbdfc6"/><polygon points="1440.5,896.4 1443.3,889.8 1447.5,885.5 1454.7,887.8 1458.3,891.9 1455.2,897.9 1446.8,902.5" fill="#bbdfc6"/><polygon points="1499.4,891.1 1500.5,888.6 1504.2,886.4 1507.4,887.3 1508.2,892.8 1503.2,896.9 1501.0,894.8" fill="#bbdfc6"/><polygon points="1520.5,877.1 1523.0,882.0 1518.6,886.4 1514.1,886.0 1512.6,880.6 1514.9,876.1 1518.1,874.3" fill="#bbdfc6"/><polygon points="1338.8,882.5 1339.4,880.1 1339.6,877.6 1342.8,876.3 1346.6,878.8 1345.2,881.3 1342.9,884.7" fill="#bbdfc6"/><polygon points="1417.5,900.6 1417.0,897.9 1418.0,893.1 1420.4,894.4 1423.9,895.8 1424.1,899.5 1420.3,900.4" fill="#bbdfc6"/><polygon points="1396.8,867.1 1394.3,867.0 1392.5,866.5 1393.0,863.6 1395.5,862.1 1396.2,862.7 1397.3,865.6" fill="#bbdfc6"/><polygon points="1483.0,837.6 1487.5,837.2 1487.9,839.9 1487.7,842.5 1485.3,843.9 1481.0,842.6 1481.8,838.9" fill="#bbdfc6"/><polygon points="1515.6,840.2 1512.4,840.6 1509.4,840.6 1508.6,836.1 1511.6,835.5 1513.0,833.9 1516.0,837.0" fill="#bbdfc6"/><ellipse cx="1297" cy="853" rx="12" ry="12" fill="#efe9d8"/><path d="M1456 857 C1450 864 1447 870 1452 877 C1455 882 1449 886 1450 892 C1451 897 1446 902 1447 906" fill="none" stroke="#9ec1f6" stroke-width="2.2"/><polyline points="1271.9,847.2 1275.0,856.0 1280.5,863.4" fill="none" stroke="#fff" stroke-width="1.4"/><polyline points="1376.5,835.5 1378.4,843.2 1379.5,851.0 1382.4,858.4 1388.3,863.7 1391.4,871.0" fill="none" stroke="#fff" stroke-width="0.9"/><polyline points="1465.8,858.6 1469.9,853.5 1475.6,850.4 1482.1,850.3 1488.0,847.4 1494.3,845.6" fill="none" stroke="#fff" stroke-width="1.4"/><polyline points="1396.2,879.6 1391.3,887.6 1383.9,893.3 1379.3,901.5 1377.7,910.8 1377.2,920.1" fill="none" stroke="#fff" stroke-width="1.1"/><polyline points="1138.0,902.8 1132.6,904.4 1127.6,906.8 1122.2,908.4 1116.7,907.5" fill="none" stroke="#fff" stroke-width="1.4"/><polyline points="1298.4,905.2 1292.6,904.1 1286.6,903.4 1280.7,904.1 1275.7,907.3 1270.0,908.9" fill="none" stroke="#fff" stroke-width="1.1"/><polyline points="1228.6,844.1 1231.1,852.9 1234.0,861.7 1234.2,870.8 1236.7,879.6 1240.4,888.1 1246.3,895.1" fill="none" stroke="#fff" stroke-width="0.9"/><polyline points="1291.8,883.1 1282.3,881.1 1274.0,875.8 1266.9,869.2 1263.2,860.2" fill="none" stroke="#fff" stroke-width="1.4"/><polyline points="1521.2,880.5 1513.8,882.5 1507.3,886.6 1499.7,888.0 1493.2,892.0" fill="none" stroke="#fff" stroke-width="1.1"/><polyline points="1333.5,876.3 1332.5,881.4 1332.5,886.5 1333.0,891.6 1335.6,896.1 1339.4,899.5" fill="none" stroke="#fff" stroke-width="1.4"/><polyline points="1464.3,859.0 1463.0,853.9 1463.1,848.5" fill="none" stroke="#fff" stroke-width="1.1"/><polyline points="1209.6,890.1 1214.7,892.5 1220.1,894.2 1224.5,897.6 1229.1,900.9" fill="none" stroke="#fff" stroke-width="1.4"/><polyline points="1378.0,883.0 1382.6,879.3 1387.7,876.4 1392.3,872.8 1396.6,868.7" fill="none" stroke="#fff" stroke-width="1.1"/><polyline points="1390.1,888.5 1392.8,894.7 1396.7,900.2 1401.8,904.7 1406.4,909.7 1412.1,913.2" fill="none" stroke="#fff" stroke-width="1.4"/><polyline points="1397.2,865.6 1391.5,863.6 1386.5,860.3 1381.6,856.8 1377.3,852.7 1375.1,847.1" fill="none" stroke="#fff" stroke-width="1.1"/><polyline points="1353.5,851.8 1347.3,850.8 1341.2,849.4 1336.2,845.5 1330.2,843.8 1324.8,840.5 1320.0,836.5" fill="none" stroke="#fff" stroke-width="1.1"/><polyline points="1483.7,902.3 1473.9,900.8 1465.0,896.7" fill="none" stroke="#fff" stroke-width="1.4"/><polyline points="1216.3,905.3 1215.5,898.3 1216.5,891.3" fill="none" stroke="#fff" stroke-width="1.4"/><polyline points="1455.7,855.9 1461.0,860.9 1464.9,866.9 1466.7,873.9 1467.5,881.1 1468.7,888.2" fill="none" stroke="#fff" stroke-width="1.1"/><polyline points="1156.0,888.5 1147.7,892.6 1141.1,899.0 1132.4,901.9 1123.1,901.9 1113.9,901.3 1105.0,903.7" fill="none" stroke="#fff" stroke-width="0.9"/><polyline points="1198.4,894.9 1200.9,900.6 1204.3,905.9 1209.5,909.3 1214.2,913.5" fill="none" stroke="#fff" stroke-width="0.9"/><polyline points="1188.1,887.5 1182.9,890.9 1177.2,893.3 1172.7,897.5 1167.6,901.1 1162.0,903.6" fill="none" stroke="#fff" stroke-width="0.9"/><polyline points="1186.6,889.2 1181.1,885.5 1176.7,880.4 1171.0,877.1" fill="none" stroke="#fff" stroke-width="0.9"/><polyline points="1392.9,880.7 1383.8,881.2 1376.0,885.9 1368.2,890.8 1363.3,898.5 1355.9,903.8" fill="none" stroke="#fff" stroke-width="0.9"/><polyline points="1252.6,842.6 1250.7,848.1 1249.5,853.8" fill="none" stroke="#fff" stroke-width="1.1"/><polyline points="1200.1,839.6 1205.4,839.1 1210.8,839.8 1216.2,839.3 1221.6,839.5 1226.4,842.2" fill="none" stroke="#fff" stroke-width="1.4"/><polyline points="1324.0,895.1 1321.7,904.5 1318.5,913.5 1313.2,921.5 1306.4,928.3" fill="none" stroke="#fff" stroke-width="1.4"/><polyline points="1387.7,840.1 1385.8,831.4 1381.3,823.8" fill="none" stroke="#fff" stroke-width="0.9"/><polyline points="1381.9,900.0 1387.4,899.2 1392.9,899.8 1398.4,899.5" fill="none" stroke="#fff" stroke-width="1.4"/><polyline points="1206.4,898.4 1202.4,902.4 1199.6,907.3 1199.0,913.0 1200.7,918.4" fill="none" stroke="#fff" stroke-width="1.1"/><polyline points="1445.7,905.8 1455.2,905.8 1464.7,905.7 1473.7,902.4 1481.8,897.4 1490.3,893.0" fill="none" stroke="#fff" stroke-width="0.9"/><polyline points="1166.1,887.7 1172.7,892.4 1180.8,893.7 1189.0,894.5 1197.0,892.7 1205.1,892.8" fill="none" stroke="#fff" stroke-width="1.1"/><polyline points="1136.1,899.6 1137.7,892.6 1136.2,885.7 1136.2,878.6 1138.9,872.0 1138.5,864.8 1134.9,858.7" fill="none" stroke="#fff" stroke-width="1.1"/><polyline points="1505.0,847.7 1505.9,841.3 1507.9,835.2 1510.4,829.2 1512.6,823.1 1515.1,817.1" fill="none" stroke="#fff" stroke-width="1.1"/><polyline points="1335.0,867.4 1325.7,864.2 1317.8,858.2 1308.1,856.2" fill="none" stroke="#fff" stroke-width="1.4"/><polyline points="1396.8,881.5 1394.9,888.4 1391.9,894.8 1390.4,901.8 1389.9,908.9 1386.8,915.3 1387.0,922.4" fill="none" stroke="#fff" stroke-width="1.1"/><polyline points="1208.1,886.9 1202.9,889.5 1197.6,891.6" fill="none" stroke="#fff" stroke-width="1.4"/><polyline points="1296.1,875.3 1289.9,874.8 1284.3,871.9 1278.8,868.8 1272.5,867.9 1267.0,864.9" fill="none" stroke="#fff" stroke-width="0.9"/><polyline points="1233.1,841.4 1224.8,839.3 1216.3,839.6 1207.7,839.2 1199.7,842.0" fill="none" stroke="#fff" stroke-width="0.9"/><polyline points="1333.6,879.9 1341.9,881.1 1350.2,882.2 1358.5,883.5 1366.0,887.4 1370.9,894.2" fill="none" stroke="#fff" stroke-width="1.1"/><polyline points="1377.5,908.9 1368.4,907.7 1360.9,902.4 1352.2,899.8 1343.3,897.3 1334.3,898.5" fill="none" stroke="#fff" stroke-width="1.1"/><polyline points="1279.5,882.3 1273.2,884.9 1266.3,884.6" fill="none" stroke="#fff" stroke-width="0.9"/><polyline points="1312.9,843.4 1317.9,849.8 1319.8,857.7" fill="none" stroke="#fff" stroke-width="0.9"/><polyline points="1472.0,847.1 1473.3,838.2 1477.5,830.2 1478.3,821.2 1478.1,812.2" fill="none" stroke="#fff" stroke-width="1.4"/><polyline points="1420.3,907.9 1415.3,900.3 1410.7,892.5" fill="none" stroke="#fff" stroke-width="1.1"/><polyline points="1445.8,842.8 1451.8,841.1 1456.4,836.8 1462.4,835.1" fill="none" stroke="#fff" stroke-width="0.9"/><polyline points="1305.2,895.7 1297.0,899.4 1288.0,899.4" fill="none" stroke="#fff" stroke-width="0.9"/><polyline points="1473.1,886.2 1481.2,881.4 1490.2,878.9 1498.4,874.4 1506.4,869.4 1511.2,861.3 1519.2,856.5" fill="none" stroke="#fff" stroke-width="1.4"/><polyline points="1323.5,871.7 1328.2,874.4 1332.3,877.9" fill="none" stroke="#fff" stroke-width="1.4"/><polyline points="1286.9,871.1 1290.6,877.0 1295.1,882.3 1299.4,887.8 1304.7,892.4 1311.3,894.7" fill="none" stroke="#fff" stroke-width="1.4"/><polyline points="1376.7,850.5 1378.8,844.2 1380.0,837.6 1377.9,831.3 1376.3,824.8 1373.6,818.7" fill="none" stroke="#fff" stroke-width="1.1"/><polyline points="1142.9,869.8 1151.1,870.5 1159.1,869.3" fill="none" stroke="#fff" stroke-width="1.4"/><polyline points="1240.8,873.0 1236.8,879.8 1230.1,883.9 1225.9,890.5 1221.3,897.0 1215.2,901.9 1207.7,904.3" fill="none" stroke="#fff" stroke-width="1.4"/><polyline points="1434.7,883.4 1431.5,875.0 1432.3,866.1 1434.7,857.4 1435.3,848.5" fill="none" stroke="#fff" stroke-width="0.9"/><polyline points="1430.4,891.7 1423.9,889.9 1417.2,889.2 1410.8,887.1" fill="none" stroke="#fff" stroke-width="1.4"/><polyline points="1395.0,902.9 1398.3,897.0 1404.1,893.3 1408.3,887.9 1410.7,881.5 1415.4,876.5 1420.8,872.4" fill="none" stroke="#fff" stroke-width="0.9"/><polyline points="1291.7,864.9 1291.2,857.0 1289.3,849.3 1289.1,841.4" fill="none" stroke="#fff" stroke-width="0.9"/><polyline points="1348.3,907.1 1343.5,913.4 1340.0,920.5 1337.6,928.1" fill="none" stroke="#fff" stroke-width="0.9"/><polyline points="1316.1,909.7 1316.3,900.5 1314.4,891.5" fill="none" stroke="#fff" stroke-width="1.1"/><polyline points="1234.7,835.8 1239.2,840.0 1244.1,843.8 1249.9,845.9 1255.5,848.6" fill="none" stroke="#fff" stroke-width="0.9"/><polyline points="1469.4,884.6 1476.3,891.5 1485.5,894.9" fill="none" stroke="#fff" stroke-width="1.4"/><polyline points="1450.9,878.9 1450.6,873.0 1447.6,867.9" fill="none" stroke="#fff" stroke-width="1.4"/><polyline points="1260.0,836.2 1255.6,843.1 1249.4,848.5" fill="none" stroke="#fff" stroke-width="1.1"/><polyline points="1202.5,901.3 1206.9,894.5 1213.9,890.4" fill="none" stroke="#fff" stroke-width="1.1"/><polyline points="1289.6,907.3 1297.3,901.6 1303.8,894.4" fill="none" stroke="#fff" stroke-width="1.4"/><polyline points="1295.7,889.4 1297.0,884.1 1298.4,878.8 1301.6,874.3" fill="none" stroke="#fff" stroke-width="0.9"/><polyline points="1273.5,862.2 1267.1,869.1 1260.1,875.2 1254.3,882.5 1246.8,888.1 1241.0,895.4 1233.7,901.2" fill="none" stroke="#fff" stroke-width="0.9"/><polyline points="1430.4,894.5 1426.3,903.5 1423.4,913.0 1420.3,922.4 1419.4,932.2 1420.9,942.0 1421.8,951.8" fill="none" stroke="#fff" stroke-width="1.1"/><polyline points="1173.6,897.1 1183.3,894.7 1192.9,897.0 1200.8,903.1" fill="none" stroke="#fff" stroke-width="0.9"/><polyline points="1376.7,843.5 1369.0,843.3 1361.3,842.3 1354.0,839.4" fill="none" stroke="#fff" stroke-width="0.9"/><polyline points="1484.4,901.9 1490.6,897.4 1495.4,891.5 1502.4,888.5" fill="none" stroke="#fff" stroke-width="1.1"/><polyline points="1328.1,883.6 1322.5,888.3 1319.6,895.0 1315.6,901.1 1315.0,908.4 1312.3,915.2" fill="none" stroke="#fff" stroke-width="1.1"/><polyline points="1488.6,886.6 1481.8,890.6 1475.7,895.3 1468.8,899.1" fill="none" stroke="#fff" stroke-width="1.1"/><polyline points="1467.9,836.4 1474.1,835.4 1480.3,835.9 1486.3,837.4 1492.5,837.6 1497.9,840.7" fill="none" stroke="#fff" stroke-width="1.1"/><polyline points="1218.8,878.4 1221.4,887.9 1225.9,896.5 1231.8,904.3 1237.8,912.0" fill="none" stroke="#fff" stroke-width="0.9"/><polyline points="1479.8,846.6 1476.5,837.4 1476.9,827.6 1474.4,818.1 1475.7,808.4 1475.6,798.7 1478.2,789.2" fill="none" stroke="#fff" stroke-width="0.9"/><polyline points="1469.1,848.2 1472.1,840.3 1478.0,834.3 1481.4,826.6 1483.2,818.4" fill="none" stroke="#fff" stroke-width="0.9"/><polyline points="1329.5,861.4 1328.8,853.0 1329.4,844.6 1331.3,836.4 1332.3,828.1 1332.0,819.7" fill="none" stroke="#fff" stroke-width="0.9"/><polyline points="1481.4,879.7 1482.4,884.7 1483.1,889.9" fill="none" stroke="#fff" stroke-width="1.4"/><polyline points="1405.3,890.8 1410.6,890.4 1415.9,889.9 1420.7,887.6 1425.3,885.0" fill="none" stroke="#fff" stroke-width="0.9"/><polyline points="1204.3,887.5 1208.6,893.6 1210.6,900.8 1209.2,908.2 1211.0,915.5 1209.2,922.8 1205.1,929.1" fill="none" stroke="#fff" stroke-width="0.9"/><polyline points="1511.2,851.5 1516.3,851.6 1520.9,849.5 1525.5,847.4" fill="none" stroke="#fff" stroke-width="1.1"/><polyline points="1292.9,877.4 1287.9,881.7 1282.7,885.8" fill="none" stroke="#fff" stroke-width="0.9"/><polyline points="1347.4,887.8 1354.4,887.3 1361.2,886.0 1367.2,882.4 1374.0,880.5" fill="none" stroke="#fff" stroke-width="1.1"/><polyline points="1476.2,896.7 1482.3,895.4 1487.8,892.6" fill="none" stroke="#fff" stroke-width="1.4"/><polyline points="1371.4,863.4 1369.1,871.4 1364.6,878.4 1357.7,883.1" fill="none" stroke="#fff" stroke-width="0.9"/><polyline points="1154.2,888.1 1151.0,895.2 1147.3,902.0 1143.8,908.9 1139.3,915.2 1134.9,921.6" fill="none" stroke="#fff" stroke-width="1.1"/><polyline points="1267.5,876.6 1263.1,881.7 1258.5,886.8 1253.5,891.3 1247.7,894.8 1242.6,899.3" fill="none" stroke="#fff" stroke-width="0.9"/><polyline points="1378.4,876.4 1376.3,884.9 1374.4,893.6 1370.7,901.6 1366.8,909.5 1363.1,917.5 1361.7,926.2" fill="none" stroke="#fff" stroke-width="1.1"/><polyline points="1190.0,906.3 1184.7,903.5 1178.8,902.1 1172.8,902.7 1166.9,901.3 1161.0,900.2 1155.3,898.3" fill="none" stroke="#fff" stroke-width="0.9"/><polyline points="1455.2,903.7 1461.0,900.6 1467.5,899.3" fill="none" stroke="#fff" stroke-width="1.1"/><polyline points="1182.6,846.0 1180.5,852.5 1178.3,858.9" fill="none" stroke="#fff" stroke-width="1.4"/><polyline points="1310.2,840.9 1302.9,845.1 1294.8,847.5 1287.9,852.4 1280.9,857.2 1277.0,864.8" fill="none" stroke="#fff" stroke-width="1.1"/><polyline points="1185.5,872.1 1183.7,865.5 1180.4,859.5 1177.4,853.4 1171.8,849.4 1165.4,846.9 1159.3,843.8" fill="none" stroke="#fff" stroke-width="1.1"/><polyline points="1253.6,876.5 1257.3,871.5 1261.7,867.0 1267.3,864.4 1271.9,860.2" fill="none" stroke="#fff" stroke-width="1.1"/><polyline points="1298.8,895.8 1291.3,889.8 1283.1,884.7 1276.1,878.1 1268.0,873.1" fill="none" stroke="#fff" stroke-width="1.4"/><polyline points="1292.9,884.6 1292.9,878.4 1293.7,872.2 1297.2,867.1 1302.3,863.6" fill="none" stroke="#fff" stroke-width="1.4"/><polyline points="1359.5,838.9 1361.7,843.9 1363.8,848.9" fill="none" stroke="#fff" stroke-width="1.1"/><polyline points="1327.2,904.3 1327.2,898.8 1327.0,893.2" fill="none" stroke="#fff" stroke-width="1.4"/><polyline points="1459.9,866.4 1453.7,870.0 1446.8,872.0" fill="none" stroke="#fff" stroke-width="1.1"/><polyline points="1138.7,852.1 1141.3,856.6 1144.6,860.7 1148.3,864.3 1152.2,867.7 1157.1,869.4 1161.2,872.6" fill="none" stroke="#fff" stroke-width="1.4"/><polyline points="1356.0,835.2 1348.5,832.9 1340.7,832.8 1333.0,834.1" fill="none" stroke="#fff" stroke-width="0.9"/><polyline points="1469.0,876.9 1470.7,871.5 1474.2,867.0 1476.0,861.6 1476.9,856.0 1477.9,850.4 1476.1,845.0" fill="none" stroke="#fff" stroke-width="1.1"/><polyline points="1517.6,855.4 1514.7,861.7 1511.4,867.8 1508.1,873.9 1505.3,880.2" fill="none" stroke="#fff" stroke-width="1.4"/><polyline points="1154.8,857.8 1159.5,849.8 1161.1,840.6 1159.9,831.4 1160.2,822.1 1164.3,813.8" fill="none" stroke="#fff" stroke-width="1.1"/><polyline points="1389.0,889.4 1392.5,894.2 1397.8,897.1 1403.5,898.9 1409.2,900.9" fill="none" stroke="#fff" stroke-width="1.4"/><polyline points="1293.3,878.1 1291.7,884.0 1289.0,889.4 1284.8,893.8 1280.2,897.8" fill="none" stroke="#fff" stroke-width="1.1"/><polyline points="1310.9,906.9 1305.6,906.9 1300.7,908.8 1296.8,912.3" fill="none" stroke="#fff" stroke-width="1.1"/><polyline points="1475.5,897.5 1466.2,895.4 1456.6,896.6" fill="none" stroke="#fff" stroke-width="1.4"/><polyline points="1220.5,890.2 1217.7,883.0 1218.1,875.4 1216.3,867.9" fill="none" stroke="#fff" stroke-width="0.9"/><polyline points="922,842.8 948.5,837.9 961.7,833.9" fill="none" stroke="#fff" stroke-width="1.2"/><polyline points="922,875 930.8,871.4" fill="none" stroke="#fff" stroke-width="1.2"/><polyline points="962.3,885.2 966.3,906" fill="none" stroke="#fff" stroke-width="1.2"/><polyline points="1109.3,833.9 1100.4,845.8 1102.4,885.2 1112.2,906" fill="none" stroke="#fff" stroke-width="1.2"/><polyline points="1187.2,833.9 1145.8,912" fill="none" stroke="#fff" stroke-width="1.2"/><polyline points="940,834 952,845 960,860 972,870" fill="none" stroke="#fff" stroke-width="1.2"/><polyline points="1000,860 1030,858 1060,866" fill="none" stroke="#fff" stroke-width="1.2"/><polyline points="1045,900 1075,890 1100,870" fill="none" stroke="#fff" stroke-width="1.2"/><polyline points="1060,834 1070,850 1065,870" fill="none" stroke="#fff" stroke-width="1.2"/><polyline points="930,900 945,893 960,895" fill="none" stroke="#fff" stroke-width="1.2"/><polyline points="1306.8,834 1314.4,860.5 1328.2,875.8 1340.4,888 1351,901.8 1356,914" fill="none" stroke="#f3b83c" stroke-width="3.2" stroke-linejoin="round"/><polyline points="1319,834 1318.2,857.5 1331.2,874.3 1348,894 1358,908" fill="none" stroke="#f3b83c" stroke-width="3.2" stroke-linejoin="round"/><polyline points="1232.5,834 1255.4,837.6 1280.8,851.6 1295,862 1312.9,870 1325,885 1351,900" fill="none" stroke="#f3b83c" stroke-width="3.2" stroke-linejoin="round"/><polyline points="1288.5,869.4 1280.8,883.4 1273.2,914" fill="none" stroke="#f3b83c" stroke-width="3.2" stroke-linejoin="round"/><polyline points="1241.4,914 1250.3,902.5 1262,902 1270,914" fill="none" stroke="#f3b83c" stroke-width="3.2" stroke-linejoin="round"/><polyline points="1320.5,849.8 1335.8,846.8 1351,845.3 1366.3,851.4 1372.4,860.5 1371,872.7 1377,882 1369.4,888 1364.8,897.2 1364.8,914" fill="none" stroke="#f3b83c" stroke-width="3.2" stroke-linejoin="round"/><polyline points="1377,882 1389.2,880.4 1405,876 1419.8,872.7 1435,860.5 1462.5,849.8 1470,852.9 1490,858 1511.4,857.5 1522,865" fill="none" stroke="#f3b83c" stroke-width="3.2" stroke-linejoin="round"/><polyline points="1494.6,834 1480.8,852.9 1470,883.4 1464,914" fill="none" stroke="#f3b83c" stroke-width="3.2" stroke-linejoin="round"/><polyline points="1499,834 1486,860 1473.2,891 1468.6,914" fill="none" stroke="#f3b83c" stroke-width="3.2" stroke-linejoin="round"/><polyline points="922.3,855.6 930.8,855.6" fill="none" stroke="#f3b83c" stroke-width="3.2" stroke-linejoin="round"/><polyline points="993.9,885.2 1005.7,895 1011.6,914" fill="none" stroke="#f3b83c" stroke-width="3.2" stroke-linejoin="round"/><polyline points="1351,900 1360,905 1364,914" fill="none" stroke="#f3b83c" stroke-width="3.2" stroke-linejoin="round"/><polyline points="1306.8,834 1314.4,860.5 1328.2,875.8 1340.4,888 1351,901.8 1356,914" fill="none" stroke="#fde08a" stroke-width="1.3" stroke-linejoin="round"/><polyline points="1319,834 1318.2,857.5 1331.2,874.3 1348,894 1358,908" fill="none" stroke="#fde08a" stroke-width="1.3" stroke-linejoin="round"/><polyline points="1232.5,834 1255.4,837.6 1280.8,851.6 1295,862 1312.9,870 1325,885 1351,900" fill="none" stroke="#fde08a" stroke-width="1.3" stroke-linejoin="round"/><polyline points="1288.5,869.4 1280.8,883.4 1273.2,914" fill="none" stroke="#fde08a" stroke-width="1.3" stroke-linejoin="round"/><polyline points="1241.4,914 1250.3,902.5 1262,902 1270,914" fill="none" stroke="#fde08a" stroke-width="1.3" stroke-linejoin="round"/><polyline points="1320.5,849.8 1335.8,846.8 1351,845.3 1366.3,851.4 1372.4,860.5 1371,872.7 1377,882 1369.4,888 1364.8,897.2 1364.8,914" fill="none" stroke="#fde08a" stroke-width="1.3" stroke-linejoin="round"/><polyline points="1377,882 1389.2,880.4 1405,876 1419.8,872.7 1435,860.5 1462.5,849.8 1470,852.9 1490,858 1511.4,857.5 1522,865" fill="none" stroke="#fde08a" stroke-width="1.3" stroke-linejoin="round"/><polyline points="1494.6,834 1480.8,852.9 1470,883.4 1464,914" fill="none" stroke="#fde08a" stroke-width="1.3" stroke-linejoin="round"/><polyline points="1499,834 1486,860 1473.2,891 1468.6,914" fill="none" stroke="#fde08a" stroke-width="1.3" stroke-linejoin="round"/><polyline points="922.3,855.6 930.8,855.6" fill="none" stroke="#fde08a" stroke-width="1.3" stroke-linejoin="round"/><polyline points="993.9,885.2 1005.7,895 1011.6,914" fill="none" stroke="#fde08a" stroke-width="1.3" stroke-linejoin="round"/><polyline points="1351,900 1360,905 1364,914" fill="none" stroke="#fde08a" stroke-width="1.3" stroke-linejoin="round"/><path d="M1282 855.5 C1285 853.5 1297 853.5 1300 855.5 L1300.5 864 C1299 868 1294 869.5 1291 870.5 C1288 869.5 1283 868 1281.5 864Z" fill="#fff" stroke="#444" stroke-width="0.9"/><text x="1291" y="865.3" text-anchor="middle" font-family="Liberation Sans" font-size="8" fill="#222">41</text><g font-family="Liberation Sans" fill="#333" stroke="#fff" stroke-width="2.5" paint-order="stroke" stroke-linejoin="round"><text x="1252.5" y="846.7" font-size="11.5">Kennesaw</text><text x="1389.5" y="882" font-size="11.5">East Cobb</text><text x="1443.5" y="846.7" font-size="11.5">Roswell</text><text x="1299" y="909.5" font-size="14.5" font-weight="bold">Marietta</text></g></svg>
</div>
<div class="a" style="left:932px;top:844px;width:168px;height:40px;background:#fff;border-radius:2px;box-shadow:0 1px 4px rgba(0,0,0,.3)"></div>
<div class="a" style="left:1001px;top:844px;width:1px;height:40px;background:#e6e6e6"></div>
<div class="a" style="left:949px;top:854px;font-size:18px;line-height:21px;font-weight:bold;color:#000">Map</div>
<div class="a" style="left:1019px;top:854px;font-size:18px;line-height:21px;color:#565656">Satellite</div>
<div class="a" style="left:1472px;top:844px;width:40px;height:40px;background:#fff;border-radius:2px;box-shadow:0 1px 4px rgba(0,0,0,.3)"></div>
<svg class="a" style="left:1482px;top:854px" width="20" height="20" viewBox="0 0 20 20"><path d="M1 6 V1 H6 M14 1 H19 V6 M19 14 V19 H14 M6 19 H1 V14" fill="none" stroke="#666" stroke-width="2.2"/></svg>

</div>
</div>
</body></html>
